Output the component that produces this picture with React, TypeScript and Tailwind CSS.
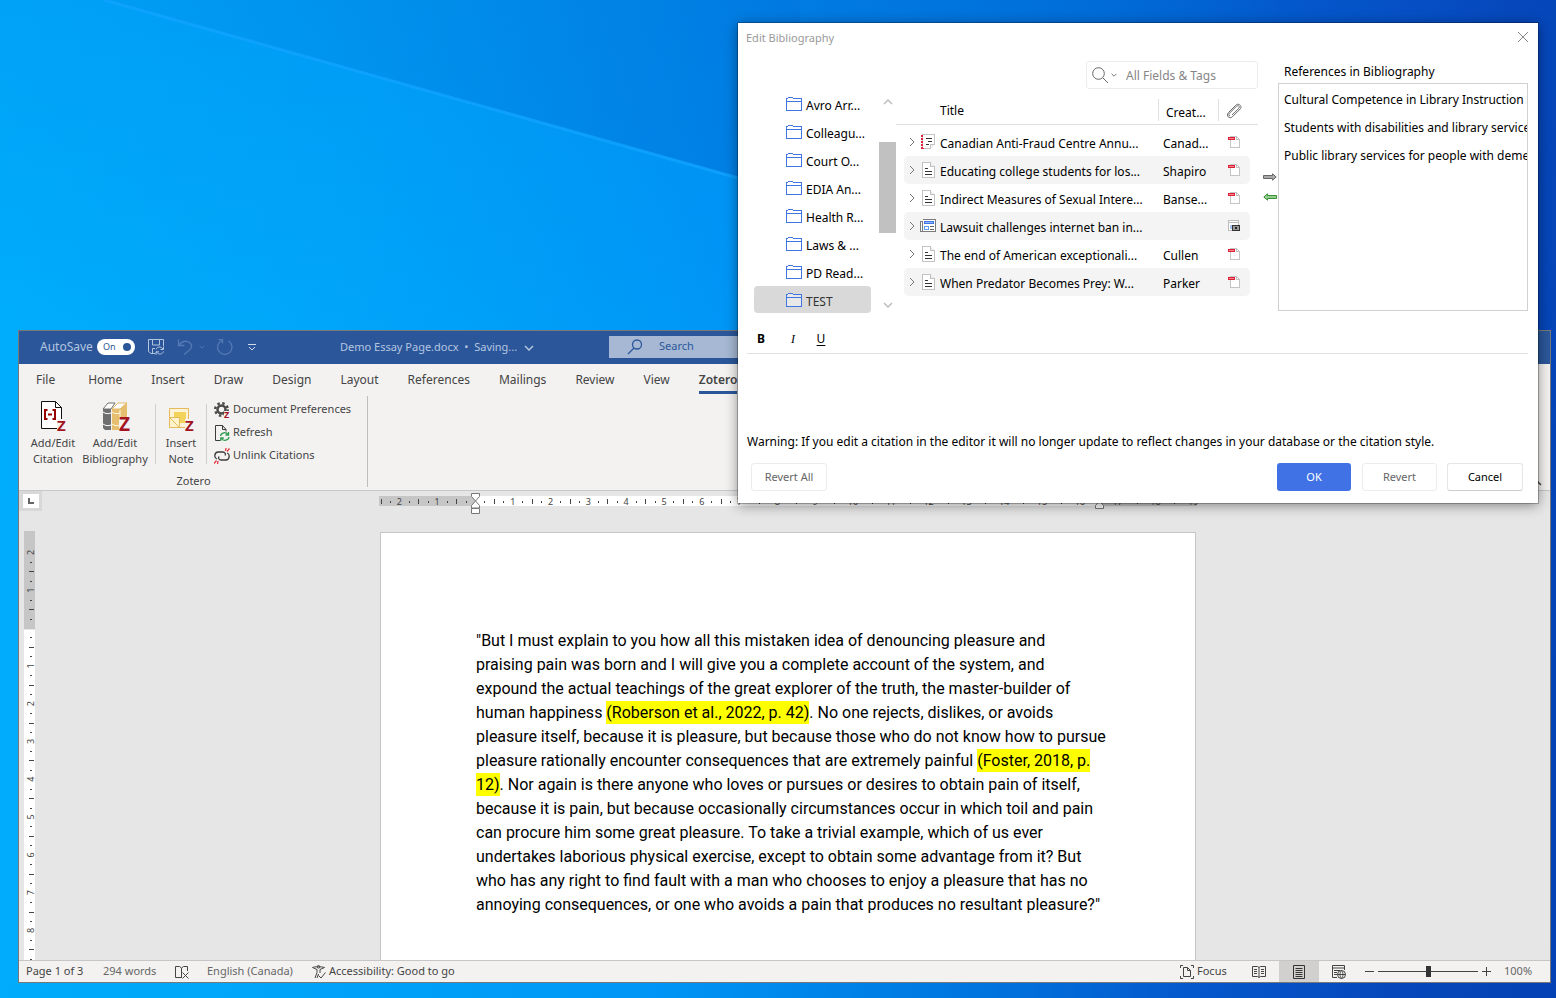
import type { ReactNode } from 'react';

const folders = ['Avro Arr...', 'Colleagu...', 'Court O...', 'EDIA An...', 'Health R...', 'Laws & ...', 'PD Read...', 'TEST'];

const items = [
  { title: 'Canadian Anti-Fraud Centre Annu...', creator: 'Canad...', icon: 'report', attachment: 'pdf' },
  { title: 'Educating college students for los...', creator: 'Shapiro', icon: 'article', attachment: 'pdf' },
  { title: 'Indirect Measures of Sexual Intere...', creator: 'Banse...', icon: 'article', attachment: 'pdf' },
  { title: 'Lawsuit challenges internet ban in...', creator: '', icon: 'news', attachment: 'snapshot' },
  { title: 'The end of American exceptionali...', creator: 'Cullen', icon: 'article', attachment: 'pdf' },
  { title: 'When Predator Becomes Prey: W...', creator: 'Parker', icon: 'article', attachment: 'pdf' },
];

const references = [
  'Cultural Competence in Library Instruction',
  'Students with disabilities and library services',
  'Public library services for people with dementia',
];

const tabs = ['File', 'Home', 'Insert', 'Draw', 'Design', 'Layout', 'References', 'Mailings', 'Review', 'View'];

function Chevron({ className, d = 'M1 1l4 4 4-4' }: { className: string; d?: string }) {
  return (
    <svg className={className} viewBox="0 0 10 6" fill="none" stroke="currentColor" strokeWidth="1.5">
      <path d={d} />
    </svg>
  );
}

function ZMark({ x, y, size }: { x: number; y: number; size: number }) {
  return (
    <text x={x} y={y} fontSize={size} fontWeight="bold" fontFamily="Open Sans, sans-serif" fill="#a3141e">
      Z
    </text>
  );
}

/* ---------- Dialog icons ---------- */

function FolderIcon() {
  return (
    <svg className="h-4 w-4 shrink-0" viewBox="0 0 16 16" fill="#fff" fillOpacity="0.4" stroke="#3f76e4" shapeRendering="crispEdges">
      <path d="M.5 14.5v-12h1l1-1h4l1 1h8v12zM.5 5.5h15" />
    </svg>
  );
}

function ItemIcon({ type }: { type: string }) {
  if (type === 'news') {
    return (
      <svg className="h-4 w-4 shrink-0" viewBox="0 0 16 16" fill="none" shapeRendering="crispEdges">
        <path d="M2.5 1.5h13v12h-15v-10h2v10" fill="#fff" stroke="#7b7b7b" />
        <path d="M4.5 3.5h9v2h-9z" fill="#8db6f6" stroke="#3f76e4" />
        <path d="M4.5 8.5h4v3h-4z" fill="#fff" stroke="#5e9cf0" />
        <path d="M10 8.5h4M10 11.5h4" stroke="#666" />
      </svg>
    );
  }
  if (type === 'report') {
    return (
      <svg className="h-4 w-4 shrink-0" viewBox="0 0 16 16" fill="none" shapeRendering="crispEdges">
        <path d="M2.5 .5h12v10l-4 4h-8z" fill="#fff" stroke="#c4c4c4" />
        <path d="M14.5 10.5h-4v4" fill="#eee" stroke="#c4c4c4" />
        <path d="M2.5 1v14" stroke="#e0233c" strokeWidth="3" strokeDasharray="2 1" />
        <path d="M3.5 1v13" stroke="#fff" />
        <path d="M6 4.5h6M8 7.5h4M6 10.5h3" stroke="#333" />
      </svg>
    );
  }
  return (
    <svg className="h-4 w-4 shrink-0" viewBox="0 0 16 16" fill="none" shapeRendering="crispEdges">
      <path d="M2.5 .5h8l4 4v11h-12z" fill="#fff" stroke="#c2c2c2" />
      <path d="M10.5 .5v4h4" fill="#eee" stroke="#c2c2c2" />
      <path d="M5 6.5h3M5 9.5h7M5 12.5h7" stroke="#333" />
    </svg>
  );
}

function AttachmentIcon({ type }: { type: string }) {
  if (type === 'snapshot') {
    return (
      <svg className="h-3 w-3" viewBox="0 0 12 12" fill="none" shapeRendering="crispEdges">
        <path d="M.5 .5h10v10H.5zM.5 2.5h10" fill="#fff" stroke="#bdbdbd" />
        <path d="M2 5h3v4H2z" fill="#a6c4f4" />
        <path d="M4.500 5.5h7v5h-7z" fill="#999" stroke="#333" />
        <path d="M7 7h2v2H7z" fill="#222" />
      </svg>
    );
  }
  return (
    <svg className="h-3 w-3" viewBox="0 0 12 12" fill="none" shapeRendering="crispEdges">
      <path d="M2.5 .5h6l3 3v8h-9z" fill="#fff" stroke="#c4c4c4" />
      <path d="M8.5 .5v3h3" stroke="#c4c4c4" />
      <path d="M0 1h7v3H0z" fill="#dc2337" />
      <path d="M1 2h5v1H1z" fill="#f2808b" />
    </svg>
  );
}

function PaperclipIcon() {
  return (
    <svg className="h-4 w-4" viewBox="0 0 16 16" fill="none" stroke="#6b6b6b">
      <path d="M2.5 9.5l7.3-7.300c2.700-2.700 7 1 4.400 3.800L6.500 13.700c-3 2.800-7-1-4-4zM4 13c-1.500-.3-1.500-2-.3-3l6.800-6.800c2-1.500 3.700.5 2.300 2.200L6 12" />
    </svg>
  );
}

function ArrowIcon({ color, dark, flip }: { color: string; dark: string; flip?: boolean }) {
  return (
    <svg className="h-2 w-[14px]" viewBox="0 0 14 8" stroke={dark} fill={color}>
      {flip ? <path d="M13.5 2.5h-9V.8L.8 4l3.700 3.200V5.500h9z" /> : <path d="M.5 2.500h9V.8L13.200 4 9.500 7.200V5.500h-9z" />}
    </svg>
  );
}

/* ---------- Word icons ---------- */

function CitationIcon() {
  return (
    <svg className="h-8 w-8 overflow-visible" viewBox="0 0 32 32" fill="none">
      <path d="M4.5 1.5h14l6 6v21h-20z" fill="#fff" stroke="#111" />
      <path d="M18.5 1.5v6h6" stroke="#111" />
      <path d="M10.5 10H8v9h2.5M15.5 10H18v9h-2.5M11 14.5h4" stroke="#990000" strokeWidth="2" />
      <path d="M20 19h9v12h-9z" fill="#f3f2f1" />
      <ZMark x={20} y={31} size={15} />
    </svg>
  );
}

function BibliographyIcon() {
  return (
    <svg className="h-8 w-8 overflow-visible" viewBox="0 0 32 32" fill="none">
      <path d="M4 9l5-6h7l-4 6z" fill="#fff" stroke="#707070" />
      <path d="M4 9h8v21H6l-2-2z" fill="#6f6f6f" />
      <path d="M4 12c3 2 5 2 8 1M4 24c3 2 5 2 8 1" stroke="#fff" />
      <path d="M13 9l6-6h9l-7 6z" fill="#fff" stroke="#e2b869" />
      <path d="M13 9h8l7-7v20l-8 8h-7z" fill="#e6be70" />
      <path d="M13 12c3 2 5 2 8 1M13 24c3 2 5 2 8 1M21 10v18" stroke="#fff6e2" />
      <path d="M20 17h10v14H20z" fill="#f3f2f1" />
      <ZMark x={20} y={31} size={19} />
    </svg>
  );
}

function NoteIcon() {
  return (
    <svg className="h-8 w-8 overflow-visible" viewBox="0 0 32 32" fill="none">
      <path d="M4.5 8.5h19v19h-19z" fill="#fdf3d6" stroke="#e6b95a" />
      <path d="M9 12h12v11H9z" fill="#f2d35c" />
      <path d="M4.5 17.5h10v10h-10zM4.5 17.5l10 10" fill="#fff3cc" stroke="#e6b95a" />
      <path d="M20 19h9v11h-9z" fill="#f3f2f1" />
      <ZMark x={20} y={31} size={15} />
    </svg>
  );
}

function PreferencesIcon() {
  return (
    <svg className="h-4 w-4 overflow-visible" viewBox="0 0 16 16" fill="none">
      <circle cx="7.5" cy="7.5" r="4" stroke="#4a4a4a" strokeWidth="2.5" />
      <circle cx="7.5" cy="7.5" r="6.3" stroke="#4a4a4a" strokeWidth="2.4" strokeDasharray="2.45 2.5" />
      <path d="M10 9h6v7h-6z" fill="#f3f2f1" />
      <ZMark x={10} y={16} size={9} />
    </svg>
  );
}

function RefreshIcon() {
  return (
    <svg className="h-4 w-4" viewBox="0 0 16 16" fill="none">
      <path d="M6 15.5H1.5V.5h7l3.5 4v2M8.5 .5v4H12" stroke="#3b3b3b" />
      <path d="M6.5 11c.5-3.500 5.500-4.500 7.500-1.500M14.500 7v3h-3M15 12c-.5 3.500-5.500 4.500-7.500 1.500M6.800 16v-3h3" stroke="#2f9a4c" strokeWidth="1.3" />
    </svg>
  );
}

function UnlinkIcon() {
  return (
    <svg className="h-4 w-4" viewBox="0 0 16 16" fill="none" stroke="#3b3b3b" strokeWidth="1.3">
      <path d="M3 11C-.5 10 .5 4 4 4h5c2 0 3 2 2 3.500M13 5c3.500 1 2.500 7-1 7H7c-2 0-3-2-2-3.500" />
      <path d="M11.500 3l.5-3M13 3.500L15.500 .5M4 13l-.5 3M2.500 12.500L0 15.500" stroke="#e2373f" />
    </svg>
  );
}

function SaveIcon() {
  return (
    <svg className="h-4 w-4" viewBox="0 0 16 16" fill="none" stroke="#b4c5e0">
      <path d="M7 14.500H3l-2.500-2V.5h15V7M4.500 .5V6h7V.5M4.500 14v-4.500H7" />
      <path d="M8 10.500c1-3 5-3.500 7-.5M15.500 7.500v3h-3M15.500 12.500c-1 3-5 3.500-7 .5M8 15.800v-3h3" />
    </svg>
  );
}

/* ---------- Rulers ---------- */

const CM = 37.8;

function rulerMarks(from: number, to: number) {
  const marks: { pos: number; label?: string; half: boolean }[] = [];
  for (let q = from * 4; q <= to * 4; q++) {
    if (q === 0) continue;
    marks.push({ pos: (q / 4) * CM, half: q % 2 === 0, label: q % 4 === 0 ? String(Math.abs(q / 4)) : undefined });
  }
  return marks;
}

function HorizontalRuler() {
  return (
    <svg className="h-6 w-[818px] shrink-0 overflow-visible" viewBox="0 0 818 24" textAnchor="middle" fontSize="9" fontFamily="Noto Sans, sans-serif" fill="#444">
      <path d="M0 5h96v10H0zM720 5h98v10h-98z" fill="#c6c6c6" />
      <path d="M96 5h624v10H96z" fill="#fff" />
      {rulerMarks(-2.5, 19).map(m =>
        m.label ? (
          <text key={m.pos} x={96 + m.pos} y="14">{m.label}</text>
        ) : (
          <rect key={m.pos} x={Math.round(96 + m.pos)} y={m.half ? 8 : 10} width="1" height={m.half ? 5 : 2} />
        ),
      )}
      <g fill="#fff" stroke="#777">
        <path d="M92.5 2.5h8v3l-4 4.5-4-4.5zM92.5 17v-2.5l4-4.5 4 4.5V17zM92.5 17.5h8v5h-8z" />
        <path d="M716.5 17.5v-3l4-4.5 4 4.5v3z" />
      </g>
    </svg>
  );
}

function VerticalRuler() {
  return (
    <svg className="h-[430px] w-[11px] overflow-visible" viewBox="0 0 11 430" textAnchor="middle" fontSize="9" fontFamily="Noto Sans, sans-serif" fill="#444">
      <path d="M0 0h11v98H0z" fill="#c6c6c6" />
      <path d="M0 99h11v331H0z" fill="#fff" />
      {rulerMarks(-2, 8.75).map(m =>
        m.label ? (
          <text key={m.pos} transform={`translate(10 ${97 + m.pos}) rotate(-90)`}>{m.label}</text>
        ) : (
          <rect key={m.pos} x={m.half ? 5 : 6} y={Math.round(97 + m.pos)} width={m.half ? 5 : 2} height="1" />
        ),
      )}
    </svg>
  );
}

/* ---------- Word ---------- */

function TitleBar() {
  return (
    <header className="flex h-[33px] items-center bg-[#2b579a] pb-0.5 pl-[21px] text-[#b4c5e0]">
      <span id="autosave" className="w-[57px] text-xs">AutoSave</span>
      <button role="switch" aria-checked="true" aria-labelledby="autosave" className="flex h-4 w-[38px] items-center justify-between rounded-full bg-white pr-1 pl-1.5 text-[9px] text-[#2b579a]">
        On
        <span className="h-2 w-2 rounded-full bg-[#2b579a]" />
      </button>
      <button aria-label="Save" className="ml-[13px]"><SaveIcon /></button>
      <button aria-label="Undo" className="ml-[13px] flex items-center gap-1.5 text-[#5479b4]">
        <svg className="h-4 w-4" viewBox="0 0 16 16" fill="none" stroke="currentColor" strokeWidth="1.3">
          <path d="M1.5 .5v6h6M2 6c4-5 9-4.500 11.500-1.500S14.500 10 7 15.500" />
        </svg>
        <Chevron className="h-1 w-1.5" />
      </button>
      <button aria-label="Repeat" className="ml-3 text-[#5479b4]">
        <svg className="h-4 w-4" viewBox="0 0 16 16" fill="none" stroke="currentColor" strokeWidth="1.3">
          <path d="M1.5 .5h4v4M5 1.500A7.200 7.200 0 1 0 11.500 2" />
        </svg>
      </button>
      <button aria-label="Customize Quick Access Toolbar" className="ml-[15px]">
        <svg className="h-2 w-2" viewBox="0 0 8 8" fill="none" stroke="#cfdaec"><path d="M0 1.5h8M1 4l3 3 3-3" /></svg>
      </button>
      <button className="ml-[84px] flex items-center gap-1 pt-0.5 text-[11px]">
        <span className="w-[180px] text-left whitespace-nowrap">Demo Essay Page.docx&nbsp; •&nbsp; Saving...</span>
        <Chevron className="h-1.5 w-2.5" />
      </button>
      <label className="ml-[75px] flex h-[22px] w-[380px] items-center gap-4 bg-[#a6b8d3] pl-[18px] text-[#2b579a]">
        <svg className="h-4 w-4" viewBox="0 0 16 16" fill="none" stroke="currentColor" strokeWidth="1.3">
          <circle cx="10" cy="5.5" r="4.5" /><path d="M7 9l-6 6" />
        </svg>
        <input aria-label="Search" placeholder="Search" className="w-40 bg-transparent text-[11px] outline-none placeholder:text-[#2b579a]" />
      </label>
    </header>
  );
}

function BigButton({ icon, children }: { icon: ReactNode; children: ReactNode }) {
  return (
    <button className="flex w-full flex-col items-center pt-0.5 text-center text-[11px] leading-4 whitespace-nowrap">
      {icon}
      <span className="mt-[3px]">{children}</span>
    </button>
  );
}

function SmallButton({ icon, children }: { icon: ReactNode; children: ReactNode }) {
  return (
    <button className="flex h-[23px] items-center gap-[3px] text-[11px] whitespace-nowrap">
      {icon}
      {children}
    </button>
  );
}

function Ribbon() {
  return (
    <div className="border-b border-[#c8c8c8] bg-[#f3f2f1] text-[#444]">
      <nav className="flex h-8 items-center gap-[29px] pl-[17px] text-xs">
        {tabs.map(t => (
          <button key={t} className="first:mr-1">{t}</button>
        ))}
        <button className="mt-1.5 border-b-[3px] border-[#2b579a] pb-[3px] font-semibold">Zotero</button>
      </nav>
      <div className="flex h-[94px] items-start pr-2">
        <div className="flex h-[91px] w-[349px] flex-col border-r border-[#bdbdbd] pt-0.5 pl-[9px]">
          <div className="flex">
            <div className="w-[50px]"><BigButton icon={<CitationIcon />}>Add/Edit<br />Citation</BigButton></div>
            <div className="ml-0.5 w-[70px]"><BigButton icon={<BibliographyIcon />}>Add/Edit<br />Bibliography</BigButton></div>
            <div className="mx-[5px] mt-1.5 h-[60px] w-px bg-[#d0d0d0]" />
            <div className="w-10"><BigButton icon={<NoteIcon />}>Insert<br />Note</BigButton></div>
            <div className="mx-[5px] mt-1.5 h-[60px] w-px bg-[#d0d0d0]" />
            <div className="flex flex-col pl-0.5">
              <SmallButton icon={<PreferencesIcon />}>Document Preferences</SmallButton>
              <SmallButton icon={<RefreshIcon />}>Refresh</SmallButton>
              <SmallButton icon={<UnlinkIcon />}>Unlink Citations</SmallButton>
            </div>
          </div>
          <span className="mt-auto pr-2 text-center text-[11px] leading-3">Zotero</span>
        </div>
        <button aria-label="Collapse the Ribbon" className="mt-auto mb-1 ml-auto">
          <Chevron className="h-1.5 w-2.5" d="M1 5l4-4 4 4" />
        </button>
      </div>
    </div>
  );
}

function Page() {
  return (
    <article className="min-h-0 w-[816px] shrink-0 overflow-hidden border border-b-0 border-[#c6c6c6] bg-white px-[95px] pt-24 font-[Roboto,sans-serif] text-base leading-6 whitespace-nowrap text-black">
      <p>
        "But I must explain to you how all this mistaken idea of denouncing pleasure and<br />
        praising pain was born and I will give you a complete account of the system, and<br />
        expound the actual teachings of the great explorer of the truth, the master-builder of<br />
        human happiness <mark className="bg-[#ff0] py-0.5">(Roberson et al., 2022, p. 42)</mark>. No one rejects, dislikes, or avoids<br />
        pleasure itself, because it is pleasure, but because those who do not know how to pursue<br />
        pleasure rationally encounter consequences that are extremely painful <mark className="bg-[#ff0] py-0.5">(Foster, 2018, p.<br />
        12)</mark>. Nor again is there anyone who loves or pursues or desires to obtain pain of itself,<br />
        because it is pain, but because occasionally circumstances occur in which toil and pain<br />
        can procure him some great pleasure. To take a trivial example, which of us ever<br />
        undertakes laborious physical exercise, except to obtain some advantage from it? But<br />
        who has any right to find fault with a man who chooses to enjoy a pleasure that has no<br />
        annoying consequences, or one who avoids a pain that produces no resultant pleasure?"
      </p>
    </article>
  );
}

function StatusBar() {
  return (
    <footer className="flex h-[22px] shrink-0 items-center border-t border-[#c6c6c6] bg-[#f3f2f1] pl-[7px] text-[11px] whitespace-nowrap text-[#444]">
      <span className="w-[77px]">Page 1 of 3</span>
      <span className="w-[72px] text-[#666]">294 words</span>
      <svg className="mr-[18px] h-[14px] w-[14px]" viewBox="0 0 14 14" fill="none" stroke="#444">
        <path d="M6.5 12.5h-6v-11h4l2 1.500 2-1.500h4V6M6.5 3v10M7.5 7.5l6 6M13.5 7.5l-6 6" />
      </svg>
      <span className="w-[105px] text-[#666]">English (Canada)</span>
      <button className="flex items-center gap-[3px]">
        <svg className="h-[14px] w-[14px]" viewBox="0 0 14 14" fill="none" stroke="#444">
          <circle cx="6.500" cy="1.800" r="1.300" />
          <path d="M.5 2.500l4.500 2v3L3 13M.5 2.500c2-1 9-1 12 0L8 4.500V8M5 13l1.500-4M6.500 10.500L9 13l4.500-5.500" />
        </svg>
        Accessibility: Good to go
      </button>
      <button className="ml-auto flex w-[72px] items-center gap-[3px]">
        <svg className="h-[14px] w-[14px]" viewBox="0 0 14 14" fill="none" stroke="#444">
          <path d="M3 .5H.5V3M11 .5h2.500V3M3 13.500H.5V11M11 13.500h2.500V11M3.500 2.500h4l3 3v6h-7zM7.500 2.500v3h3" />
        </svg>
        Focus
      </button>
      <button aria-label="Read Mode" className="flex w-[27px]">
        <svg className="h-[14px] w-[14px]" viewBox="0 0 14 14" fill="none" stroke="#444">
          <path d="M.5 1.500h5l1.500 1 1.500-1h5v10h-5l-1.500 1-1.500-1h-5zM7 2.500v10M2 4.500h3M2 6.500h3M2 8.500h3M9 4.500h3M9 6.500h3M9 8.500h3" />
        </svg>
      </button>
      <button aria-label="Print Layout" className="flex h-full w-10 items-center justify-center bg-[#d2d0ce]">
        <svg className="h-[14px] w-3" viewBox="0 0 12 14" fill="none" stroke="#333">
          <path d="M.5 .5h11v13H.5zM2.500 3.500h7M2.500 5.500h7M2.500 7.500h7M2.500 9.500h7M2.500 11.500h7" />
        </svg>
      </button>
      <button aria-label="Web Layout" className="ml-[13px] w-[33px]">
        <svg className="h-[14px] w-[14px]" viewBox="0 0 14 14" fill="none" stroke="#444">
          <path d="M5 12.500H.5v-12h12V5M.5 3h12M2 5.500h6M2 7.500h3M2 9.500h3" />
          <circle cx="9.500" cy="9.500" r="4" /><path d="M5.500 9.500h8M9.500 5.500c-2 2.500-2 5.500 0 8M9.500 5.500c2 2.500 2 5.500 0 8" />
        </svg>
      </button>
      <button aria-label="Zoom out" className="w-[13px]">
        <svg className="h-[9px] w-[9px]" viewBox="0 0 9 9" stroke="#444"><path d="M0 4.500h9" /></svg>
      </button>
      <input
        type="range"
        aria-label="Zoom"
        defaultValue="50"
        className="h-[11px] w-[100px] appearance-none bg-[linear-gradient(#444,#444)] bg-[length:100%_1px] bg-center bg-no-repeat [&::-webkit-slider-thumb]:h-[11px] [&::-webkit-slider-thumb]:w-[5px] [&::-webkit-slider-thumb]:appearance-none [&::-webkit-slider-thumb]:bg-[#333]"
      />
      <button aria-label="Zoom in" className="ml-1 w-[22px]">
        <svg className="h-[9px] w-[9px]" viewBox="0 0 9 9" stroke="#444"><path d="M0 4.500h9M4.500 0v9" /></svg>
      </button>
      <span className="w-[46px] text-[#666]">100%</span>
    </footer>
  );
}

function WordWindow() {
  return (
    <main className="absolute top-[330px] right-[5px] bottom-[15px] left-[18px] flex flex-col overflow-hidden border border-[#787878] bg-[#e6e6e6]">
      <TitleBar />
      <Ribbon />
      <div className="grid min-h-0 flex-1 grid-cols-[24px_1fr_17px] grid-rows-[40px_1fr] overflow-hidden">
        <div className="flex h-5 w-[23px] items-center justify-center bg-[#d8d8d8]">
          <div className="flex h-[14px] w-4 items-center justify-center bg-white">
            <div className="h-1.5 w-1.5 border-b-2 border-l-2 border-[#666]" />
          </div>
        </div>
        <div className="flex justify-center"><HorizontalRuler /></div>
        <div />
        <div className="pl-[5px]"><VerticalRuler /></div>
        <div className="flex justify-center pt-px"><Page /></div>
        <div />
      </div>
      <StatusBar />
    </main>
  );
}

/* ---------- Edit Bibliography dialog ---------- */

function Collections() {
  return (
    <div className="mt-[29px] flex h-56 gap-2">
      <ul className="w-[117px]">
        {folders.map(f => (
          <li key={f} className="h-7">
            <button className={`flex h-[27px] w-full items-center gap-1 rounded pl-8 ${f === 'TEST' ? 'bg-[#d9d9d9] text-[#333]' : ''}`}>
              <FolderIcon />
              <span className="pt-1">{f}</span>
            </button>
          </li>
        ))}
      </ul>
      <div className="flex w-[17px] flex-col items-center pt-[9px] pb-[6px] text-[#bdbdbd]">
        <Chevron className="h-1.5 w-2.5" d="M1 5l4-4 4 4" />
        <div className="mt-[37px] h-[91px] w-full bg-[#c1c1c1]" />
        <Chevron className="mt-auto h-1.5 w-2.5" />
      </div>
    </div>
  );
}

function ItemsTable() {
  return (
    <div className="flex flex-1 flex-col">
      <div className="ml-auto flex h-7 w-[172px] items-center rounded-[3px] border border-[#ededed] pl-[5px]">
        <svg className="h-4 w-4 text-[#666]" viewBox="0 0 16 16" fill="none" stroke="currentColor">
          <circle cx="6.5" cy="6.5" r="5.8" /><path d="M11 11l5 5" />
        </svg>
        <Chevron className="ml-[3px] h-1 w-1.5 text-[#666]" />
        <input aria-label="All Fields & Tags" placeholder="All Fields & Tags" className="ml-[9px] w-28 pt-0.5 text-xs outline-none placeholder:text-[#868686]" />
      </div>
      <table className="mt-[7px] w-full table-fixed border-separate border-spacing-0 text-left whitespace-nowrap">
        <colgroup>
          <col />
          <col className="w-[60px]" />
          <col className="w-10" />
        </colgroup>
        <thead>
          <tr className="h-[29px]">
            <th className="border-b border-[#e0e0e0] p-0 pt-0.5 pl-11 font-normal">Title</th>
            <th className="border-b border-[#e0e0e0] p-0 font-normal">
              <div className="h-[22px] border-l border-[#e0e0e0] pt-1 pl-[7px] leading-5">Creat...</div>
            </th>
            <th aria-label="Attachments" className="border-b border-[#e0e0e0] p-0">
              <div className="flex h-[22px] items-center border-l border-[#e0e0e0] pt-0.5 pl-[7px]"><PaperclipIcon /></div>
            </th>
          </tr>
        </thead>
        <tbody className="before:block before:h-[3px]">
          {items.map((item, i) => {
            const bg = i % 2 ? 'bg-[#f4f4f4]' : '';
            return (
              <tr key={item.title}>
                <td className="p-0 pl-2">
                  <div className={`flex h-7 items-center rounded-l-[5px] pl-1 ${bg}`}>
                    <svg className="h-2.5 w-2" viewBox="0 0 8 10" fill="none" stroke="#777"><path d="M2 1l4 4-4 4" /></svg>
                    <span className="ml-1"><ItemIcon type={item.icon} /></span>
                    <span className="ml-1 pt-1">{item.title}</span>
                  </div>
                </td>
                <td className="p-0"><div className={`h-7 pt-1 pl-[5px] leading-6 ${bg}`}>{item.creator}</div></td>
                <td className="p-0 pr-2">
                  <div className={`flex h-7 items-center rounded-r-[5px] pl-2.5 ${bg}`}><AttachmentIcon type={item.attachment} /></div>
                </td>
              </tr>
            );
          })}
        </tbody>
      </table>
    </div>
  );
}

function EditBibliography() {
  return (
    <section role="dialog" aria-labelledby="dialog-title" className="absolute top-[23px] right-[18px] flex h-[480px] w-[800px] flex-col bg-white text-xs text-black shadow-[0_2px_12px_rgba(0,0,0,0.45)] outline outline-[#00000040]">
      <div className="flex h-[30px] items-center justify-between pr-[9px] pl-2">
        <h1 id="dialog-title" className="text-[11px] text-[#999]">Edit Bibliography</h1>
        <button aria-label="Close" className="pb-0.5">
          <svg className="h-3 w-3" viewBox="0 0 12 12" stroke="#888"><path d="M1 1l10 10M11 1L1 11" /></svg>
        </button>
      </div>
      <div className="flex h-[272px] pt-2 pr-2.5 pl-4">
        <Collections />
        <ItemsTable />
        <div className="flex w-5 flex-col items-end gap-3 pt-28 pr-px">
          <button aria-label="Add reference"><ArrowIcon color="#aaa" dark="#666" /></button>
          <button aria-label="Remove reference"><ArrowIcon color="#8fd08a" dark="#3d8f3a" flip /></button>
        </div>
        <div className="flex w-[250px] flex-col">
          <h2 className="h-[22px] pl-1.5 leading-[22px]">References in Bibliography</h2>
          <ul className="h-[228px] overflow-hidden border border-[#d0d0d0] pt-0.5 whitespace-nowrap">
            {references.map(r => (
              <li key={r} className="h-7 pl-[5px] leading-7">{r}</li>
            ))}
          </ul>
        </div>
      </div>
      <div className="mr-2.5 ml-[9px] flex flex-1 flex-col">
        <div className="flex h-[29px] items-center border-b border-[#e0e0e0] pl-1.5">
          <button className="w-4 font-bold">B</button>
          <button className="ml-4 w-4 font-['Liberation_Serif',serif] italic">I</button>
          <button className="ml-3 w-4 underline underline-offset-2">U</button>
        </div>
        <div contentEditable className="flex-1 outline-none" />
      </div>
      <p className="mb-[11px] pl-[9px] leading-5">
        Warning: If you edit a citation in the editor it will no longer update to reflect changes in your database or the citation style.
      </p>
      <div className="mb-3 flex h-7 pr-[15px] pl-[13px] text-[11px]">
        <button className="w-[76px] rounded-[3px] border border-[#ececec] text-[#666]">Revert All</button>
        <button className="ml-auto w-[74px] rounded-[3px] bg-[#4072e5] text-white">OK</button>
        <button className="ml-[11px] w-[75px] rounded-[3px] border border-[#ececec] text-[#666]">Revert</button>
        <button className="ml-2.5 w-[76px] rounded-[3px] border border-[#e6e6e6] border-b-[#ccc]">Cancel</button>
      </div>
    </section>
  );
}

export default function App() {
  return (
    <div className="relative h-screen w-full overflow-hidden bg-[linear-gradient(97deg,#00aefc_0%,#00a6f9_22%,#0096f6_46%,#0074de_66%,#0458cc_78%,#0648bc_90%,#0442b4_100%)] font-['Noto_Sans',sans-serif]">
      <svg className="absolute inset-0 h-full w-full" viewBox="0 0 1556 998" preserveAspectRatio="none">
        <defs>
          <linearGradient id="shade" x1="0" x2="1">
            <stop offset="0" stopColor="#0060c0" stopOpacity="0.05" />
            <stop offset="0.5" stopColor="#0050c0" stopOpacity="0.35" />
            <stop offset="1" stopColor="#0048c0" stopOpacity="0" />
          </linearGradient>
          <linearGradient id="top" x1="0" x2="0" y1="0" y2="1">
            <stop offset="0" stopColor="#0070e0" stopOpacity="0.2" />
            <stop offset="1" stopColor="#0070e0" stopOpacity="0" />
          </linearGradient>
        </defs>
        <path d="M0 0h800v330H0z" fill="url(#top)" />
        <path d="M104 0L738 178H1556V0z" fill="url(#shade)" />
        <path d="M104 0L738 178" stroke="#10a4ff" strokeWidth="3" strokeOpacity="0.8" />
      </svg>
      <WordWindow />
      <EditBibliography />
    </div>
  );
}
